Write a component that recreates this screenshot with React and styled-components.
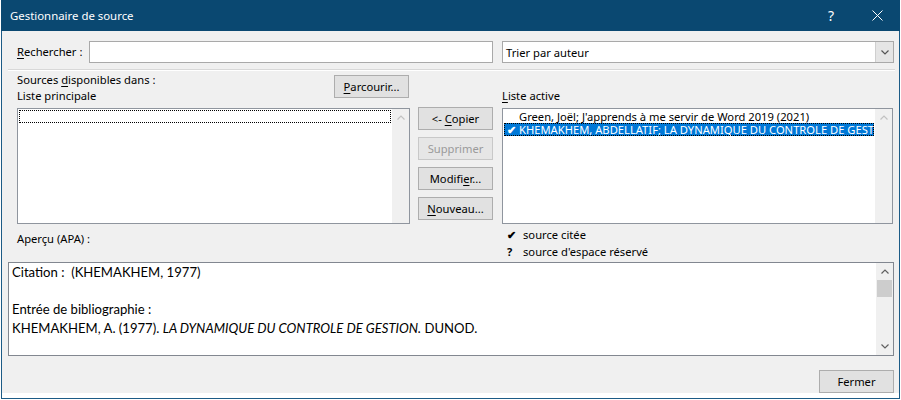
import React from 'react';
import styled, { createGlobalStyle } from 'styled-components';

const UI_FONT = `"Noto Sans", "Open Sans", sans-serif`;
const DOC_FONT = `Lato, "Noto Sans", sans-serif`;

const GlobalStyle = createGlobalStyle`
  html, body {
    margin: 0;
    padding: 0;
    background: #ffffff;
  }
  body {
    font-family: ${UI_FONT};
    font-size: 11.2px;
    color: #000000;
  }
`;

const Window = styled.div`
  margin-left: 1px;
  width: 899px;
  box-sizing: border-box;
  border-left: 1px solid #1c5b86;
  border-right: 1px solid #1c5b86;
  border-bottom: 1px solid #1c5b86;
  background: #ffffff;
  padding-bottom: 5px;
`;

const TitleBar = styled.div`
  height: 31px;
  background: #0a4871;
  color: #ffffff;
  display: flex;
  align-items: center;
  padding-left: 9px;
  font-size: 11.4px;
  margin-left: -1px;
  margin-right: -1px;
`;

const Title = styled.div`
  flex: 1;
`;

const TitleButton = styled.div`
  width: 46px;
  height: 31px;
  display: flex;
  align-items: center;
  justify-content: center;
  font-size: 14px;
`;

const Body = styled.div`
  background: #f0f0f0;
  height: 362px;
  display: flex;
  flex-direction: column;
`;

const SearchRow = styled.div`
  display: flex;
  align-items: center;
  margin-top: 10px;
  padding-left: 15px;
  height: 22px;
`;

const Label = styled.div`
  width: ${p => p.width || 'auto'};
  white-space: nowrap;
  line-height: 16px;
`;

const Key = styled.span`
  text-decoration: underline;
  text-underline-offset: 2px;
`;

const TextInput = styled.div`
  width: 404px;
  height: 22px;
  box-sizing: border-box;
  border: 1px solid #a9a9a9;
  background: #ffffff;
  margin-right: 9px;
`;

const Select = styled.div`
  width: 392px;
  height: 22px;
  box-sizing: border-box;
  border: 1px solid #a9a9a9;
  background: #ffffff;
  display: flex;
  align-items: center;
`;

const SelectValue = styled.div`
  flex: 1;
  padding-left: 3px;
`;

const SelectArrow = styled.div`
  width: 17px;
  height: 20px;
  background: #e5e5e5;
  border-left: 1px solid #cfcfcf;
  display: flex;
  align-items: center;
  justify-content: center;
`;

const Separator = styled.div`
  margin: 6px 0 0 6px;
  width: 887px;
  height: 1px;
  background: #d8d8d8;
  border-bottom: 1px solid #ffffff;
`;

const Middle = styled.div`
  display: grid;
  grid-template-columns: 393px 75px 392px;
  column-gap: 8px;
  padding-left: 15px;
  & > :nth-child(3n) {
    margin-left: 1px;
  }
`;

const HeaderLeft = styled.div`
  height: 37px;
  display: flex;
  justify-content: space-between;
`;

const HeaderLabels = styled.div`
  padding-top: 1px;
`;

const HeaderRight = styled.div`
  height: 37px;
  display: flex;
  align-items: flex-end;
  padding-bottom: 4px;
  box-sizing: border-box;
`;

const Button = styled.div`
  width: 75px;
  height: 23px;
  box-sizing: border-box;
  border: 1px solid ${p => (p.disabled ? '#c8c8c8' : '#adadad')};
  background: ${p => (p.disabled ? '#e6e6e6' : '#e1e1e1')};
  color: ${p => (p.disabled ? '#9a9a9a' : '#000000')};
  display: flex;
  align-items: center;
  justify-content: center;
  white-space: pre;
  margin-top: ${p => p.top || 0}px;
  margin-right: ${p => p.right || 0}px;
`;

const ListBox = styled.div`
  height: 116px;
  box-sizing: border-box;
  border: 1px solid #8f959e;
  background: #ffffff;
  display: flex;
`;

const ListItems = styled.div`
  flex: 1;
  min-width: 0;
  overflow: hidden;
  padding: 1px 1px 0 1px;
`;

const ListItem = styled.div`
  height: 13px;
  line-height: 13px;
  display: flex;
  align-items: center;
  white-space: nowrap;
  overflow: hidden;
  box-sizing: border-box;
  background: ${p => (p.selected ? '#0078d7' : 'transparent')};
  color: ${p => (p.selected ? '#ffffff' : '#000000')};
  outline: ${p => (p.focused ? '1px dotted #000000' : 'none')};
  outline-offset: -1px;
`;

const ItemMark = styled.span`
  flex: none;
  width: 15px;
  padding-left: 3px;
  box-sizing: border-box;
  font-size: 11px;
  font-weight: bold;
`;

const ScrollBar = styled.div`
  flex: none;
  width: 17px;
  background: #f0f0f0;
  display: flex;
  flex-direction: column;
  align-items: center;
  justify-content: ${p => (p.both ? 'space-between' : 'flex-start')};
  position: relative;
`;

const ArrowCell = styled.div`
  height: 17px;
  width: 17px;
  display: flex;
  align-items: center;
  justify-content: center;
`;

const Thumb = styled.div`
  position: absolute;
  left: 1px;
  right: 1px;
  top: 17px;
  height: 17px;
  background: #cdcdcd;
`;

const ButtonColumn = styled.div`
  display: flex;
  flex-direction: column;
  gap: 7px;
  margin-top: -1px;
`;

const Lower = styled.div`
  display: flex;
  height: 38px;
  padding-left: 15px;
`;

const PreviewLabel = styled.div`
  width: 490px;
  padding-top: 7px;
`;

const Legend = styled.div`
  padding-top: 2px;
`;

const LegendRow = styled.div`
  display: flex;
  height: 17px;
  align-items: center;
`;

const LegendMark = styled.span`
  width: 16px;
  padding-left: 0;
  font-weight: bold;
  font-size: 11px;
`;

const Preview = styled.div`
  margin-left: 6px;
  width: 886px;
  height: 95px;
  box-sizing: border-box;
  border: 1px solid #828790;
  background: #ffffff;
  display: flex;
`;

const PreviewText = styled.div`
  flex: 1;
  padding: 0 3px;
  font-family: ${DOC_FONT};
  font-size: 13.1px;
  line-height: 18.6px;
  white-space: pre;
`;

const Footer = styled.div`
  display: flex;
  justify-content: flex-end;
  margin-top: 14px;
`;

const Chevron = ({ up, color = '#606060' }) => (
  <svg width="8" height="5" viewBox="0 0 8 5">
    <path
      d={up ? 'M0.5 4.5 L4 1 L7.5 4.5' : 'M0.5 0.5 L4 4 L7.5 0.5'}
      fill="none"
      stroke={color}
      strokeWidth="1.2"
    />
  </svg>
);

const CloseIcon = () => (
  <svg width="11" height="11" viewBox="0 0 11 11">
    <path d="M0.5 0.5 L10.5 10.5 M10.5 0.5 L0.5 10.5" stroke="#ffffff" strokeWidth="1" />
  </svg>
);

export default function App() {
  return (
    <>
      <GlobalStyle />
      <Window>
        <TitleBar>
          <Title>Gestionnaire de source</Title>
          <TitleButton>?</TitleButton>
          <TitleButton>
            <CloseIcon />
          </TitleButton>
        </TitleBar>
        <Body>
          <SearchRow>
            <Label width="72px">
              <Key>R</Key>echercher :
            </Label>
            <TextInput />
            <Select>
              <SelectValue>Trier par auteur</SelectValue>
              <SelectArrow>
                <Chevron color="#555555" />
              </SelectArrow>
            </Select>
          </SearchRow>
          <Separator />
          <Middle>
            <HeaderLeft>
              <HeaderLabels>
                <Label>
                  Sources <Key>d</Key>isponibles dans :
                </Label>
                <Label>Liste principale</Label>
              </HeaderLabels>
              <Button top={4} right={1}>
                <Key>P</Key>arcourir...
              </Button>
            </HeaderLeft>
            <div />
            <HeaderRight>
              <Label>
                <Key>L</Key>iste active
              </Label>
            </HeaderRight>

            <ListBox>
              <ListItems>
                <ListItem focused />
              </ListItems>
              <ScrollBar>
                <ArrowCell>
                  <Chevron up color="#c2c2c2" />
                </ArrowCell>
              </ScrollBar>
            </ListBox>
            <ButtonColumn>
              <Button>
                {'<- '}
                <Key>C</Key>opier
              </Button>
              <Button disabled>Supprimer</Button>
              <Button>
                Modifi<Key>e</Key>r...
              </Button>
              <Button>
                <Key>N</Key>ouveau...
              </Button>
            </ButtonColumn>
            <ListBox>
              <ListItems>
                <ListItem>
                  <ItemMark />
                  Green, Joël; J'apprends à me servir de Word 2019 (2021)
                </ListItem>
                <ListItem selected focused>
                  <ItemMark>✔</ItemMark>
                  KHEMAKHEM, ABDELLATIF; LA DYNAMIQUE DU CONTROLE DE GESTION
                </ListItem>
              </ListItems>
              <ScrollBar>
                <ArrowCell>
                  <Chevron up color="#c2c2c2" />
                </ArrowCell>
              </ScrollBar>
            </ListBox>
          </Middle>
          <Lower>
            <PreviewLabel>Aperçu (APA) :</PreviewLabel>
            <Legend>
              <LegendRow>
                <LegendMark>✔</LegendMark>source citée
              </LegendRow>
              <LegendRow>
                <LegendMark>?</LegendMark>source d'espace réservé
              </LegendRow>
            </Legend>
          </Lower>
          <Preview>
            <PreviewText>
              <div>{'Citation :  (KHEMAKHEM, 1977)'}</div>
              <div> </div>
              <div>Entrée de bibliographie :</div>
              <div>
                {'KHEMAKHEM, A. (1977). '}
                <i>LA DYNAMIQUE DU CONTROLE DE GESTION.</i>
                {' DUNOD.'}
              </div>
            </PreviewText>
            <ScrollBar both>
              <ArrowCell>
                <Chevron up />
              </ArrowCell>
              <Thumb />
              <ArrowCell>
                <Chevron />
              </ArrowCell>
            </ScrollBar>
          </Preview>
          <Footer>
            <Button right={5}>Fermer</Button>
          </Footer>
        </Body>
      </Window>
    </>
  );
}
